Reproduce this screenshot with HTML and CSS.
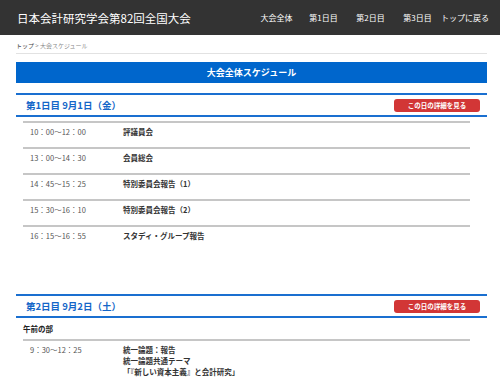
FILE: index.html
```html
<!DOCTYPE html>
<html lang="ja">
<head>
  <meta charset="UTF-8" />
  <title>大会全体スケジュール</title>
  <link rel="stylesheet" href="styles.css">
</head>
<body>

  <header class="site-header">
    <div class="site-title">日本会計研究学会第82回全国大会</div>
    <nav class="global-nav">
      <a href="#">大会全体</a>
      <a href="#">第1日目</a>
      <a href="#">第2日目</a>
      <a href="#">第3日目</a>
      <a href="#">トップに戻る</a>
    </nav>
  </header>

  <div class="container">
    <div class="breadcrumb"><a href="#">トップ</a> &gt; 大会スケジュール</div>

    <h1 class="page-title">大会全体スケジュール</h1>

    <section class="day">
      <div class="day-head">
        <h2>第1日目 9月1日（金）</h2>
        <a href="#" class="detail-btn">この日の詳細を見る</a>
      </div>
      <ul class="sched">
        <li><span class="time">10：00〜12：00</span><span class="item">評議員会</span></li>
        <li><span class="time">13：00〜14：30</span><span class="item">会員総会</span></li>
        <li><span class="time">14：45〜15：25</span><span class="item">特別委員会報告（1）</span></li>
        <li><span class="time">15：30〜16：10</span><span class="item">特別委員会報告（2）</span></li>
        <li><span class="time">16：15〜16：55</span><span class="item">スタディ・グループ報告</span></li>
      </ul>
    </section>

    <section class="day">
      <div class="day-head">
        <h2>第2日目 9月2日（土）</h2>
        <a href="#" class="detail-btn">この日の詳細を見る</a>
      </div>
      <div class="session-label">午前の部</div>
      <ul class="sched">
        <li>
          <span class="time">9：30〜12：25</span>
          <span class="item">統一論題：報告<br>統一論題共通テーマ<br>「『新しい資本主義』と会計研究」</span>
        </li>
      </ul>
    </section>
  </div>

</body>
</html>
```

FILE: styles.css
```css
* { box-sizing: border-box; }
body {
  font-family: "Noto Sans CJK JP", "Noto Sans", sans-serif;
  margin: 0;
  background-color: #ffffff;
  color: #333;
}

a { text-decoration: none; }

.site-header {
  display: flex;
  justify-content: space-between;
  align-items: center;
  height: 35px;
  padding: 0 12px 0 17px;
  background-color: #333333;
  color: #fff;
}

.site-title {
  font-size: 11.5px;
}

.global-nav {
  display: flex;
}

.global-nav a {
  width: 47px;
  text-align: center;
  white-space: nowrap;
  color: #fff;
  font-size: 8px;
}

.container {
  padding: 0 13px 0 16px;
}

.breadcrumb {
  padding: 7px 0 3px;
  line-height: 8px;
  font-size: 6px;
  color: #888;
  border-bottom: 1px solid #e2e2e2;
  margin-bottom: 8px;
}

.breadcrumb a {
  color: #444;
}

.page-title {
  margin: 0 0 10px;
  height: 21px;
  line-height: 21px;
  background-color: #0066cc;
  color: #fff;
  font-size: 9px;
  font-weight: bold;
  text-align: center;
}

.day {
  margin-bottom: 43px;
}

.day-head {
  display: flex;
  justify-content: space-between;
  align-items: center;
  height: 24px;
  padding: 0 7px 0 10px;
  border-top: 2px solid #1a6fd0;
  border-bottom: 2px solid #1a6fd0;
}

.day-head h2 {
  margin: 0;
  font-size: 9.5px;
  font-weight: bold;
  color: #1466c8;
}

.detail-btn {
  width: 86px;
  height: 13px;
  line-height: 13px;
  border-radius: 3px;
  background-color: #d23636;
  color: #fff;
  font-size: 6.5px;
  font-weight: bold;
  text-align: center;
}

.session-label {
  margin: 0 17px 0 7px;
  padding: 6px 0 5px;
  line-height: 10px;
  font-size: 7.5px;
  font-weight: bold;
  color: #222;
}

.sched {
  list-style: none;
  margin: 4px 17px 0 7px;
  padding: 0;
}

.session-label + .sched {
  margin-top: 0;
}

.sched li {
  display: flex;
  padding: 3px 0 10px;
  line-height: 11px;
  font-size: 7.5px;
  border-top: 2px solid #c6c6c6;
}

.sched .time {
  width: 100px;
  flex-shrink: 0;
  padding-left: 7px;
  color: #555;
}

.sched .item {
  font-weight: bold;
  color: #333;
}
```
